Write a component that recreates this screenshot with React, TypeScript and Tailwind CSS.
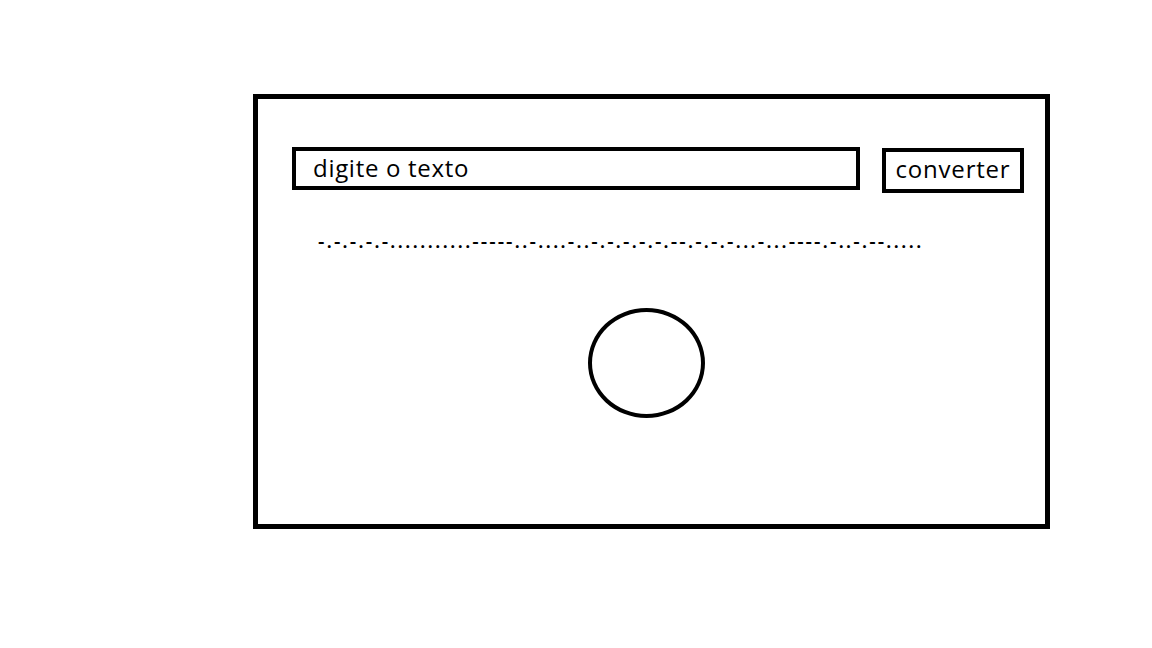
import React, { useState } from 'react';

const MORSE = '-.-.-.-.-...........-----..-....-..-.-.-.-.-.--.-.-.-...-...----.-..-.--.....';

const App: React.FC = () => {
  const [text, setText] = useState('');

  return (
    <div className="w-[1152px] h-[648px] bg-white overflow-hidden" style={{ fontFamily: '"Open Sans", "Liberation Sans", sans-serif' }}>
      <div className="ml-[253px] mt-[94px] w-[797px] h-[435px] border-[5px] border-black flex flex-col pt-[48px] pl-[34px]">
        {/* Input row */}
        <div className="flex items-start gap-[22px]">
          <input
            value={text}
            onChange={(e) => setText(e.target.value)}
            placeholder="digite o texto"
            className="w-[568px] h-[43px] border-[4px] border-black pl-[17px] pb-[3px] text-[24px] tracking-[0.7px] text-black placeholder:text-black outline-none"
          />
          <button className="mt-px w-[142px] h-[45px] border-[4px] border-black text-[24px] tracking-[0.8px] text-black flex items-center justify-center pb-[3px]">
            converter
          </button>
        </div>

        {/* Morse output */}
        <div className="mt-[38px] pl-[26px] text-[20px] font-semibold leading-none text-black tracking-[2px] whitespace-nowrap">
          {MORSE}
        </div>

        {/* Signal lamp */}
        <div className="mt-[57px] ml-[296px] w-[117px] h-[110px] rounded-[50%] border-[4px] border-black" />
      </div>
    </div>
  );
};

export default App;
